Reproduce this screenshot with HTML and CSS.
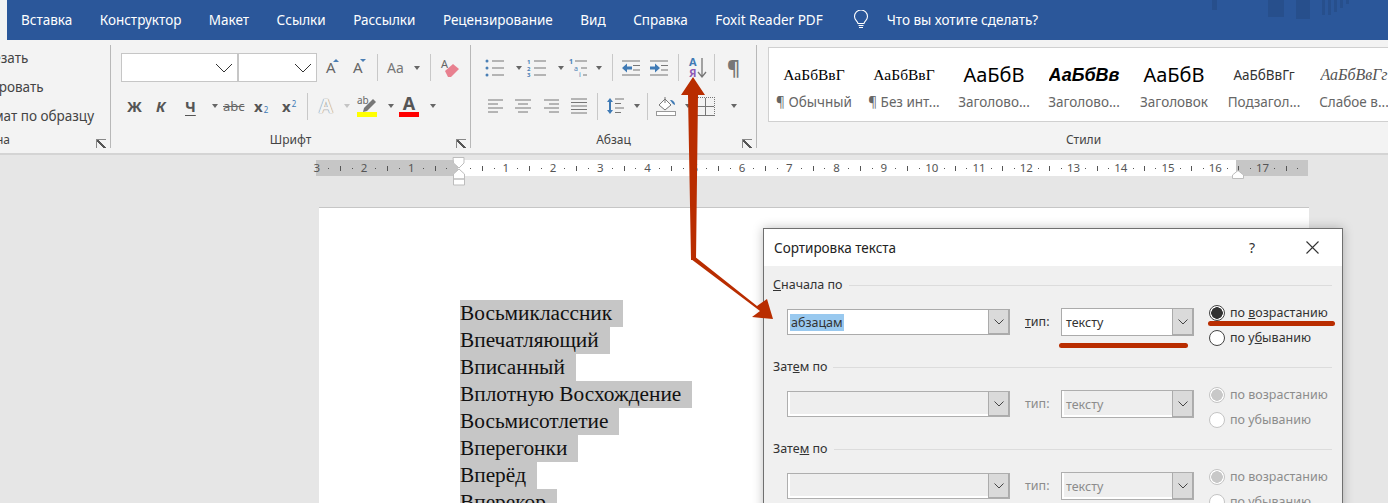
FILE: index.html
```html
<!DOCTYPE html>
<html lang="ru">
<head>
  <meta charset="UTF-8">
  <title>Сортировка текста</title>
  <link rel="stylesheet" href="styles.css">
</head>
<body>

<header class="tabs">
  <span class="tab-active"></span>
  <nav class="tab-list">
    <span>Вставка</span>
    <span>Конструктор</span>
    <span>Макет</span>
    <span>Ссылки</span>
    <span>Рассылки</span>
    <span>Рецензирование</span>
    <span>Вид</span>
    <span>Справка</span>
    <span>Foxit Reader PDF</span>
  </nav>
  <svg class="bulb" width="16" height="20" viewBox="0 0 16 20" fill="none" stroke="#fff" stroke-width="1.1">
    <path d="M5 13.5C4.5 11 1.5 10 1.5 6.5a6.5 6.5 0 0 1 13 0c0 3.500-3 4.500-3.500 7z"/>
    <path d="M5.500 15.500h5M6 17.500h4"/>
  </svg>
  <span class="tell-me">Что вы хотите сделать?</span>
  <svg class="tab-art" width="150" height="20" viewBox="0 0 150 20" fill="#274f8c">
    <rect x="0" y="0" width="5" height="10"/>
    <rect x="56" y="0" width="16" height="17"/>
    <rect x="84" y="0" width="14" height="19"/>
    <rect x="110" y="0" width="3" height="15"/>
    <rect x="116" y="0" width="3" height="15"/>
    <rect x="122" y="0" width="3" height="12"/>
    <rect x="128" y="0" width="3" height="8"/>
    <rect x="134" y="0" width="3" height="4"/>
  </svg>
</header>

<section class="ribbon">
  <div class="group group-clip">
    <div class="clip-list">
      <span>Вырезать</span>
      <span>Копировать</span>
      <span>Формат по образцу</span>
    </div>
    <div class="group-label label-clip">Буфер обмена<i class="launcher"></i></div>
  </div>

  <div class="group group-font">
    <div class="row row-top">
      <div class="combo-font w116"><svg width="20" height="10" viewBox="0 0 20 10" fill="none" stroke="#333"><path d="M1 1l8 8 8-8"/></svg></div>
      <div class="combo-font w80"><svg width="20" height="10" viewBox="0 0 20 10" fill="none" stroke="#333"><path d="M1 1l8 8 8-8"/></svg></div>
      <span class="btn w27 ml9 grow-a">А<i class="tip-up"></i></span>
      <span class="btn w24 grow-a">А<i class="tip-down"></i></span>
      <i class="sep"></i>
      <span class="btn w27 ml9 case-a">Аа</span>
      <i class="caret"></i>
      <i class="sep ml10"></i>
      <span class="btn ml10 w20">
        <svg width="20" height="20" viewBox="0 0 20 20">
          <text x="0" y="10" font-size="11" font-family="Noto Sans" fill="#666">A</text>
          <path d="M4 13l8-7 6 5-8 8h-3z" fill="#e8808f"/>
        </svg>
      </span>
    </div>
    <div class="row row-low pl16">
      <span class="btn w29 fmt">Ж</span>
      <span class="btn w29 fmt ital">К</span>
      <span class="btn w27 fmt under">Ч</span>
      <i class="caret mr5"></i>
      <span class="btn w31 abc">abc</span>
      <span class="btn w28 fmt">x<sub>2</sub></span>
      <span class="btn w25 fmt">x<sup>2</sup></span>
      <i class="sep"></i>
      <span class="btn ml11 w25 effect">А</span>
      <i class="caret caret-off"></i>
      <span class="btn ml7 w31">
        <svg width="20" height="24" viewBox="0 0 20 24">
          <text x="0" y="10" font-size="10" font-family="Noto Sans" fill="#666">ab</text>
          <path d="M7 14l9-9 3 3-9 9-4 1z" fill="#777"/>
          <rect x="0" y="18" width="20" height="5" fill="#ffff00"/>
        </svg>
      </span>
      <i class="caret"></i>
      <span class="btn ml5 w31">
        <svg width="20" height="24" viewBox="0 0 20 24">
          <text x="10" y="16" text-anchor="middle" font-size="18" font-weight="700" font-family="Noto Sans" fill="#555">А</text>
          <rect x="0" y="18" width="20" height="5" fill="#ff0000"/>
        </svg>
      </span>
      <i class="caret"></i>
    </div>
    <div class="group-label">Шрифт<i class="launcher"></i></div>
  </div>

  <div class="group group-para">
    <div class="row row-top pl14">
      <span class="btn w31">
        <svg width="20" height="18" viewBox="0 0 20 18" fill="#4a7fb5">
          <circle cx="2" cy="2" r="1.500"/><circle cx="2" cy="9" r="1.500"/><circle cx="2" cy="16" r="1.500"/>
          <path d="M7 2h12M7 9h12M7 16h12" stroke="#777" stroke-width="1.200"/>
        </svg>
      </span>
      <i class="caret mr5"></i>
      <span class="btn w31">
        <svg width="20" height="18" viewBox="0 0 20 18" font-family="Noto Sans" font-size="6" font-weight="700" fill="#4a7fb5">
          <text x="0" y="5">1</text><text x="0" y="12">2</text><text x="0" y="18">3</text>
          <path d="M7 2h12M7 9h12M7 16h12" stroke="#777" stroke-width="1.200"/>
        </svg>
      </span>
      <i class="caret mr5"></i>
      <span class="btn w27">
        <svg width="20" height="18" viewBox="0 0 20 18" font-family="Noto Sans" font-size="7" fill="#4a7fb5">
          <text x="0" y="5" font-weight="700">1</text><text x="5" y="12">a</text><text x="10" y="18">i</text>
          <path d="M6 2h12M12 9h6M14 16h4" stroke="#777" stroke-width="1.200"/>
        </svg>
      </span>
      <i class="caret"></i>
      <i class="sep ml10"></i>
      <span class="btn ml9 w28">
        <svg width="18" height="16" viewBox="0 0 18 16">
          <path d="M0 1h18M11 5.500h7M11 10h7M0 15h18" stroke="#777" stroke-width="1.200"/>
          <path d="M0 8l5-4.500v3h5v3H5v3z" fill="#3f7ab5"/>
        </svg>
      </span>
      <span class="btn w28">
        <svg width="18" height="16" viewBox="0 0 18 16">
          <path d="M0 1h18M11 5.500h7M11 10h7M0 15h18" stroke="#777" stroke-width="1.200"/>
          <path d="M10 8L5 3.500v3H0v3h5v3z" fill="#3f7ab5"/>
        </svg>
      </span>
      <i class="sep"></i>
      <span class="btn ml10 w25">
        <svg width="18" height="22" viewBox="0 0 18 22" font-family="Noto Sans" font-size="11" font-weight="700">
          <text x="0" y="9" fill="#3f7ab5">А</text>
          <text x="0" y="20" fill="#8e5bb5">Я</text>
          <path d="M13 1v18M9 15l4 5 4-5" fill="none" stroke="#777" stroke-width="1.300"/>
        </svg>
      </span>
      <i class="sep"></i>
      <span class="btn ml12 pilcrow">¶</span>
    </div>
    <div class="row row-low pl17">
      <span class="btn w27"><svg width="16" height="14" viewBox="0 0 16 14"><path d="M0 1h15M0 5h10M0 9h15M0 13h10" stroke="#777"/></svg></span>
      <span class="btn w29"><svg width="16" height="14" viewBox="0 0 16 14"><path d="M0 1h16M3 5h10M0 9h16M3 13h10" stroke="#777"/></svg></span>
      <span class="btn w27"><svg width="15" height="14" viewBox="0 0 15 14"><path d="M0 1h15M5 5h10M0 9h15M5 13h10" stroke="#777"/></svg></span>
      <span class="btn w26"><svg width="16" height="16" viewBox="0 0 16 16"><path d="M0 1h16M0 4.500h16M0 8h16M0 11.500h16M0 15h16" stroke="#777"/></svg></span>
      <i class="sep"></i>
      <span class="btn ml9 w27">
        <svg width="18" height="18" viewBox="0 0 18 18">
          <path d="M3 1l3 4H4v8h2l-3 4-3-4h2V5H0z" fill="#3f7ab5"/>
          <path d="M8 2h9M8 6.500h6M8 11h9M8 15.500h6" stroke="#777" stroke-width="1.200"/>
        </svg>
      </span>
      <i class="caret"></i>
      <i class="sep ml7"></i>
      <span class="btn ml8 w29">
        <svg width="20" height="20" viewBox="0 0 20 20">
          <path d="M3 9l6-6 6 6-6 5z" fill="#fff" stroke="#777"/>
          <path d="M9 1v6" stroke="#777"/>
          <path d="M14 4c3 0 5 2 5 5l-2-1z" fill="#3f7ab5"/>
          <rect x="0.500" y="15.500" width="19" height="4" fill="#fff" stroke="#999"/>
        </svg>
      </span>
      <i class="caret mr5"></i>
      <span class="btn w35 borders"></span>
      <i class="caret"></i>
    </div>
    <div class="group-label">Абзац<i class="launcher"></i></div>
  </div>

  <div class="group group-styles">
    <div class="gallery">
      <div class="style-item"><span class="sample s-normal">АаБбВвГ</span><span class="style-name">¶ Обычный</span></div>
      <div class="style-item"><span class="sample s-normal">АаБбВвГ</span><span class="style-name">¶ Без инт...</span></div>
      <div class="style-item"><span class="sample s-head">АаБбВ</span><span class="style-name">Заголово...</span></div>
      <div class="style-item"><span class="sample s-head2">АаБбВв</span><span class="style-name">Заголово...</span></div>
      <div class="style-item"><span class="sample s-head">АаБбВ</span><span class="style-name">Заголовок</span></div>
      <div class="style-item"><span class="sample s-sub">АаБбВвГг</span><span class="style-name">Подзагол...</span></div>
      <div class="style-item"><span class="sample s-weak">АаБбВвГг</span><span class="style-name">Слабое в...</span></div>
    </div>
    <div class="group-label">Стили</div>
  </div>
</section>

<main class="workspace">
  <div class="ruler">
    <div class="ruler-cell"><b>3</b><i></i><u></u><i></i></div>
    <div class="ruler-cell"><b>2</b><i></i><u></u><i></i></div>
    <div class="ruler-cell"><b>1</b><i></i><u></u><i></i></div>
    <div class="ruler-cell"><b></b><i></i><u></u><i></i></div>
    <div class="ruler-cell"><b>1</b><i></i><u></u><i></i></div>
    <div class="ruler-cell"><b>2</b><i></i><u></u><i></i></div>
    <div class="ruler-cell"><b>3</b><i></i><u></u><i></i></div>
    <div class="ruler-cell"><b>4</b><i></i><u></u><i></i></div>
    <div class="ruler-cell"><b>5</b><i></i><u></u><i></i></div>
    <div class="ruler-cell"><b>6</b><i></i><u></u><i></i></div>
    <div class="ruler-cell"><b>7</b><i></i><u></u><i></i></div>
    <div class="ruler-cell"><b>8</b><i></i><u></u><i></i></div>
    <div class="ruler-cell"><b>9</b><i></i><u></u><i></i></div>
    <div class="ruler-cell"><b>10</b><i></i><u></u><i></i></div>
    <div class="ruler-cell"><b>11</b><i></i><u></u><i></i></div>
    <div class="ruler-cell"><b>12</b><i></i><u></u><i></i></div>
    <div class="ruler-cell"><b>13</b><i></i><u></u><i></i></div>
    <div class="ruler-cell"><b>14</b><i></i><u></u><i></i></div>
    <div class="ruler-cell"><b>15</b><i></i><u></u><i></i></div>
    <div class="ruler-cell"><b>16</b><i></i><u></u><i></i></div>
    <div class="ruler-cell"><b>17</b><i></i><u></u><i></i></div>
    <svg class="marker-left" width="14" height="29" viewBox="0 0 14 29" fill="#fff" stroke="#bdbdbd">
      <path d="M1 .500h11V6l-5 5-5.500-5zM1.500 22v-5L7 12l5.500 5v5zM1.500 22h11v6h-11z"/>
    </svg>
    <svg class="marker-right" width="12" height="9" viewBox="0 0 12 9" fill="#fff" stroke="#bdbdbd">
      <path d="M.500 8.500V5L6 .500 11.500 5v3.500z"/>
    </svg>
  </div>
  <div class="page">
    <span class="sel">Восьмиклассник</span>
    <span class="sel">Впечатляющий</span>
    <span class="sel">Вписанный</span>
    <span class="sel">Вплотную Восхождение</span>
    <span class="sel">Восьмисотлетие</span>
    <span class="sel">Вперегонки</span>
    <span class="sel">Вперёд</span>
    <span class="sel">Вперекор</span>
  </div>
</main>

<div class="dialog">
  <div class="dialog-head">
    <span class="dialog-title">Сортировка текста</span>
    <span class="dialog-help">?</span>
    <svg class="dialog-close" width="13" height="13" viewBox="0 0 13 13" fill="none" stroke="#333" stroke-width="1.100"><path d="M.5.500l12 12M12.500.500l-12 12"/></svg>
  </div>
  <div class="dialog-body">
    <div class="sort-section">
      <div class="sort-title"><span><u>С</u>начала по</span></div>
      <div class="sort-row">
        <div class="combo combo-key"><div class="combo-field"><span class="picked">абзацам</span></div><div class="combo-arrow"><svg width="10" height="6" viewBox="0 0 10 6" fill="none" stroke="#444"><path d="M.5.500L5 5 9.500.500"/></svg></div></div>
        <span class="type-label"><u>т</u>ип:</span>
        <div class="combo combo-type"><div class="combo-field">тексту</div><div class="combo-arrow"><svg width="10" height="6" viewBox="0 0 10 6" fill="none" stroke="#444"><path d="M.5.500L5 5 9.500.500"/></svg></div></div>
        <div class="radios">
          <label class="radio"><i class="dot dot-on"></i><span>по <u>в</u>озрастанию</span></label>
          <label class="radio"><i class="dot"></i><span>по у<u>б</u>ыванию</span></label>
        </div>
      </div>
    </div>
    <div class="sort-section off">
      <div class="sort-title"><span>Зат<u>е</u>м по</span></div>
      <div class="sort-row">
        <div class="combo combo-key"><div class="combo-field"></div><div class="combo-arrow"><svg width="10" height="6" viewBox="0 0 10 6" fill="none" stroke="#444"><path d="M.5.500L5 5 9.500.500"/></svg></div></div>
        <span class="type-label">тип:</span>
        <div class="combo combo-type"><div class="combo-field">тексту</div><div class="combo-arrow"><svg width="10" height="6" viewBox="0 0 10 6" fill="none" stroke="#444"><path d="M.5.500L5 5 9.500.500"/></svg></div></div>
        <div class="radios">
          <label class="radio"><i class="dot dot-on"></i><span>по возрастанию</span></label>
          <label class="radio"><i class="dot"></i><span>по убыванию</span></label>
        </div>
      </div>
    </div>
    <div class="sort-section off">
      <div class="sort-title"><span>Зате<u>м</u> по</span></div>
      <div class="sort-row">
        <div class="combo combo-key"><div class="combo-field"></div><div class="combo-arrow"><svg width="10" height="6" viewBox="0 0 10 6" fill="none" stroke="#444"><path d="M.5.500L5 5 9.500.500"/></svg></div></div>
        <span class="type-label">тип:</span>
        <div class="combo combo-type"><div class="combo-field">тексту</div><div class="combo-arrow"><svg width="10" height="6" viewBox="0 0 10 6" fill="none" stroke="#444"><path d="M.5.500L5 5 9.500.500"/></svg></div></div>
        <div class="radios">
          <label class="radio"><i class="dot dot-on"></i><span>по возрастанию</span></label>
          <label class="radio"><i class="dot"></i><span>по убыванию</span></label>
        </div>
      </div>
    </div>
  </div>
</div>

<svg class="marks" width="1388" height="503" viewBox="0 0 1388 503" fill="#b92d00">
  <path d="M693 77l12 18h-7l-2 165h-5l-3-165h-7z"/>
  <path d="M691 259l3-3 63 50 10-7 6 20-21-2 8-6z"/>
  <rect x="1059" y="343" width="129" height="5" rx="2.500"/>
  <rect x="1208" y="321" width="127" height="5" rx="2.500"/>
</svg>

</body>
</html>
```

FILE: styles.css
```css
* { box-sizing: border-box; }
body {
  margin: 0;
  height: 503px;
  overflow: hidden;
  position: relative;
  font-family: "Noto Sans", sans-serif;
  background: #e6e6e6;
  display: flex;
  flex-direction: column;
}
i { font-style: normal; }

/* title tabs */
.tabs {
  flex: none;
  height: 40px;
  background: #2b579a;
  color: #fff;
  display: flex;
  align-items: center;
  font-size: 13.5px;
  position: relative;
}
.tab-active {
  width: 7px;
  height: 100%;
  background: #f3f3f3;
}
.tab-list {
  display: flex;
  gap: 27.5px;
  margin-left: 14px;
}
.bulb { margin-left: 30px; }
.tell-me { margin-left: 18px; }
.tab-art {
  position: absolute;
  right: 26px;
  top: 0;
}

/* ribbon */
.ribbon {
  flex: none;
  height: 115px;
  padding-top: 5px;
  background: #f3f3f3;
  border-bottom: 2px solid #d4d4d4;
  display: flex;
  color: #555;
}
.group {
  height: 103px;
  border-right: 1px solid #b8b8b8;
  display: flex;
  flex-direction: column;
  flex: none;
}
.group-clip { width: 111px; overflow: hidden; }
.group-font { width: 360px; }
.group-para { width: 286px; }
.group-styles { flex: 1; border-right: none; padding-left: 11px; }
.clip-list {
  margin-left: -34px;
  display: flex;
  flex-direction: column;
  gap: 3px;
  font-size: 13.5px;
  color: #444;
  white-space: nowrap;
}
.clip-list span { height: 26px; line-height: 26px; }
.group-label {
  margin-top: auto;
  height: 16px;
  line-height: 16px;
  font-size: 12px;
  color: #444;
  text-align: center;
  position: relative;
}
.label-clip { text-align: left; margin-left: -73px; white-space: nowrap; }
.launcher {
  position: absolute;
  right: 4px;
  bottom: 0;
  width: 10px;
  height: 9px;
  border-top: 1px solid #888;
  border-left: 1px solid #888;
  background: linear-gradient(45deg, transparent 40%, #555 40%, #555 55%, transparent 55%);
}
.row {
  display: flex;
  align-items: center;
}
.row-top { height: 29px; margin-top: 8px; }
.row-low { height: 28px; margin-top: 10px; }
.group-font .row-top { padding-left: 10px; }
.pl14 { padding-left: 14px; }
.pl16 { padding-left: 16px; }
.pl17 { padding-left: 17px; }
.combo-font {
  height: 29px;
  background: #fff;
  border: 1px solid #c6c6c6;
  display: flex;
  align-items: center;
  justify-content: flex-end;
  padding-right: 2px;
}
.w80 { width: 80px; border-left: 2px solid #c6c6c6; }
.w116 { width: 116px; border-right: none; }
.w20 { width: 20px; }
.w24 { width: 24px; }
.w25 { width: 25px; }
.w26 { width: 26px; }
.w27 { width: 27px; }
.w28 { width: 28px; }
.w29 { width: 29px; }
.w31 { width: 31px; }
.w35 { width: 35px; }
.ml5 { margin-left: 5px; }
.ml7 { margin-left: 7px; }
.ml8 { margin-left: 8px; }
.ml9 { margin-left: 9px; }
.ml10 { margin-left: 10px; }
.ml11 { margin-left: 11px; }
.ml12 { margin-left: 12px; }
.mr5 { margin-right: 5px; }
.btn {
  flex: none;
  display: flex;
  align-items: center;
  position: relative;
  line-height: 1;
}
.btn svg { display: block; overflow: visible; }
.sep {
  flex: none;
  width: 1px;
  height: 27px;
  background: #c8c8c8;
}
.caret {
  flex: none;
  width: 0;
  height: 0;
  border: 3.5px solid transparent;
  border-top: 4px solid #666;
  border-bottom: none;
}
.caret-off { border-top-color: #c4c4c4; }
.grow-a { font-size: 15px; color: #666; }
.tip-up, .tip-down {
  position: absolute;
  left: 7px;
  top: -1px;
  width: 0;
  height: 0;
  border: 3px solid transparent;
}
.tip-up { border-top: none; border-bottom: 3px solid #4a7fb5; }
.tip-down { border-bottom: none; border-top: 3px solid #4a7fb5; }
.case-a { font-size: 14px; color: #777; width: 27px; }
.fmt { font-size: 15px; font-weight: 700; color: #555; }
.fmt sub, .fmt sup { font-size: 8px; color: #3f7ab5; font-weight: 400; line-height: 0; margin-left: 1px; }
.fmt sup { position: relative; top: -2px; }
.fmt sub { position: relative; top: 4px; vertical-align: baseline; }
.fmt sup { vertical-align: super; }
.ital { font-style: italic; }
.under { text-decoration: underline; text-underline-offset: 3px; }
.abc { font-size: 13px; color: #666; text-decoration: line-through; }
.effect {
  font-size: 20px;
  font-weight: 700;
  color: #f3f3f3;
  text-shadow: 0 0 1px #888, 0 0 1px #888;
}
.pilcrow { font-size: 20px; font-weight: 700; color: #777; }
.borders { height: 17px; }
.borders::before {
  content: "";
  width: 17px;
  height: 17px;
  border: 1px dotted #777;
  border-bottom: 1px solid #777;
  background:
    linear-gradient(#777, #777) center / 100% 1px no-repeat,
    linear-gradient(#777, #777) center / 1px 100% no-repeat;
}

/* styles gallery */
.gallery {
  height: 75px;
  margin-top: 2px;
  background: #fff;
  border: 1px solid #d0d0d0;
  border-right: none;
  display: flex;
  overflow: hidden;
}
.style-item {
  flex: none;
  width: 90px;
  display: flex;
  flex-direction: column;
  align-items: center;
  overflow: hidden;
}
.sample {
  display: block;
  max-width: 76px;
  height: 32px;
  margin-top: 11px;
  line-height: 32px;
  color: #000;
  white-space: nowrap;
  overflow: hidden;
}
.s-normal { font-family: "Liberation Serif", serif; font-size: 15.5px; }
.s-head { font-family: "Noto Sans", sans-serif; font-size: 20px; }
.s-head2 { font-family: "Liberation Sans", sans-serif; font-size: 18px; font-style: italic; font-weight: 700; }
.s-sub { font-family: "Noto Sans", sans-serif; font-size: 13.5px; color: #333; }
.s-weak { font-family: "Liberation Serif", serif; font-size: 16px; font-style: italic; color: #555; max-width: 72px; }
.style-name {
  font-size: 13.5px;
  color: #666;
  margin-top: 2px;
  white-space: nowrap;
}

/* document */
.workspace {
  flex: 1;
  min-height: 0;
  padding-top: 5px;
  display: flex;
  flex-direction: column;
}
.ruler {
  align-self: flex-start;
  margin-left: 316px;
  width: 992px;
  height: 16px;
  display: flex;
  padding-left: 0;
  position: relative;
  background: linear-gradient(to right, #c6c6c6 142px, #fff 142px, #fff 920px, #c6c6c6 920px);
}
.ruler-cell {
  flex: none;
  width: 47.25px;
  position: relative;
  left: -5px;
  display: grid;
  grid-template-columns: repeat(4, 1fr);
  align-items: center;
  justify-items: center;
  font-size: 11.5px;
  color: #555;
}
.ruler-cell b { font-weight: 400; line-height: 16px; }
.ruler-cell i { width: 1px; height: 1px; background: #555; }
.ruler-cell u { width: 1px; height: 5px; background: #555; }
.marker-left { position: absolute; left: 136px; top: -3px; }
.marker-right { position: absolute; left: 916px; top: 10px; }
.page {
  margin: 31px 0 0 319px;
  width: 990px;
  flex: 1;
  background: #fff;
  border-top: 1px solid #c6c6c6;
  padding: 92px 0 0 141px;
  font-family: "Liberation Serif", serif;
  font-size: 21.33px;
  line-height: 27px;
  color: #111;
  overflow: hidden;
}
.sel {
  display: block;
  width: fit-content;
  padding-right: 11px;
  background: #c6c6c6;
}

/* sort dialog */
.dialog {
  position: absolute;
  left: 763px;
  top: 228px;
  width: 580px;
  height: 300px;
  background: #f0f0f0;
  border: 1px solid #6f6f6f;
  box-shadow: 0 0 10px rgba(0, 0, 0, 0.25);
  font-size: 12.5px;
  color: #333;
}
.dialog-head {
  height: 37px;
  background: #fff;
  display: flex;
  align-items: center;
  padding-left: 10px;
}
.dialog-title { font-size: 13.5px; color: #222; flex: 1; }
.dialog-help { font-size: 14px; margin-right: 51px; }
.dialog-close { margin-right: 23px; }
.dialog-body { padding-top: 11px; }
.sort-section {
  padding: 0 10px 9px 9px;
}
.sort-title {
  height: 16px;
  display: flex;
  align-items: center;
  gap: 6px;
  line-height: 16px;
}
.sort-title::after {
  content: "";
  flex: 1;
  height: 1px;
  background: #dcdcdc;
}
.sort-row {
  height: 50px;
  margin-top: 7px;
  padding-left: 14px;
  display: flex;
  align-items: flex-start;
}
.combo {
  flex: none;
  display: flex;
  background: #fff;
  border: 1px solid #ababab;
}
.combo-key { width: 223px; height: 26px; margin-top: 9px; }
.combo-type { width: 133px; height: 28px; margin-top: 8px; }
.combo-field {
  flex: 1;
  padding-left: 2px;
  line-height: 25px;
  color: #333;
}
.combo-type .combo-field { padding-left: 4px; line-height: 27px; }
.picked { background: #99c9ef; display: inline-block; height: 17px; line-height: 17px; padding: 0 1px; }
.combo-arrow {
  width: 21px;
  background: #dadada;
  border-left: 1px solid #ababab;
  border-right: 1px solid #ababab;
  border-bottom: 1px solid #ababab;
  display: flex;
  align-items: center;
  justify-content: center;
}
.combo-type .combo-arrow { width: 21px; }
.type-label {
  width: 51px;
  padding-left: 15px;
  margin-top: 13px;
  line-height: 17px;
  flex: none;
}
.radios {
  margin-left: 15px;
  display: flex;
  flex-direction: column;
}
.radio {
  height: 25px;
  display: flex;
  align-items: center;
  gap: 5px;
}
.dot {
  width: 16px;
  height: 16px;
  border-radius: 50%;
  background: #fff;
  border: 1px solid #444;
  flex: none;
}
.dot-on { background: radial-gradient(circle, #333 0, #333 5.5px, #fff 6px); }
.off .combo { background: #eee; box-shadow: inset 2px -2px 0 #fff; border-color: #aeaeae; }
.off .combo-field, .off .type-label, .off .radio span { color: #8c8c8c; }
.off .dot { border-color: #c4c4c4; }
.off .dot-on { background: radial-gradient(circle, #c8c8c8 0, #c8c8c8 5.5px, #fff 6px); }

/* red annotations */
.marks {
  position: absolute;
  left: 0;
  top: 0;
  pointer-events: none;
}
```
